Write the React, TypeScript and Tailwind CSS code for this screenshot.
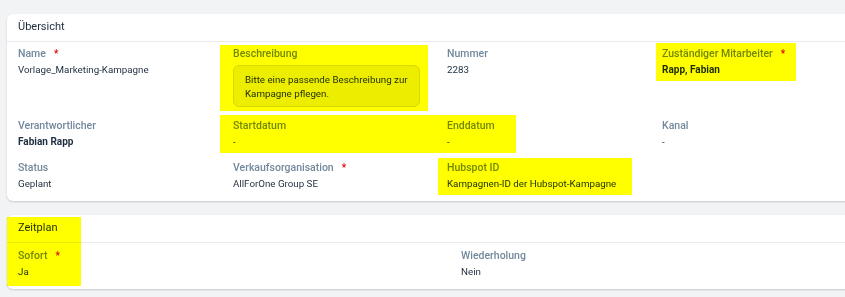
import React from "react";

const font = { fontFamily: 'Roboto, "Liberation Sans", Arial, sans-serif' };

function Label({ text, required }: { text: string; required?: boolean }) {
  return (
    <div className="flex items-center h-[12px] leading-[12px] text-[10.5px] font-medium text-[#73889c]">
      <span>{text}</span>
      {required && <span className="ml-[8px] text-[10px] text-[#e00000]">*</span>}
    </div>
  );
}

function Field({
  label,
  value,
  required,
  bold,
}: {
  label: string;
  value: string;
  required?: boolean;
  bold?: boolean;
}) {
  return (
    <div className="flex flex-col">
      <Label text={label} required={required} />
      <div
        className={`mt-[3px] h-[14px] leading-[14px] text-[#1d2d3e] ${
          bold ? "font-bold text-[10px]" : "text-[9.75px]"
        }`}
      >
        {value}
      </div>
    </div>
  );
}

function CardHeader({ title }: { title: string }) {
  return (
    <div className="h-[28px] flex items-center pl-[11px] border-b border-[#e8eaed] text-[11px] text-[#1d2d3e]">
      {title}
    </div>
  );
}

export default function App() {
  return (
    <div
      className="relative isolate w-[845px] h-[297px] overflow-hidden bg-[#f2f3f5] pt-[14px] pl-[7px]"
      style={font}
    >
      <div className="w-[900px] bg-white rounded-[6px] shadow-[0_1px_2px_rgba(0,0,0,0.18)]">
        <CardHeader title="Übersicht" />
        <div className="grid grid-cols-[215px_214px_215px_215px] gap-y-[13px] pl-[11px] pt-[6px] pb-[10px]">
          <Field label="Name" value="Vorlage_Marketing-Kampagne" required />
          <div className="flex flex-col">
            <Label text="Beschreibung" />
            <div className="mt-[5px] w-[187px] h-[42px] rounded-[6px] border border-[#d8d8d8] bg-[#ededed] px-[11px] pt-[7px] text-[9.75px] leading-[14px] text-[#1d2d3e] whitespace-nowrap">
              Bitte eine passende Beschreibung zur
              <br />
              Kampagne pflegen.
            </div>
          </div>
          <Field label="Nummer" value="2283" />
          <Field label="Zuständiger Mitarbeiter" value="Rapp, Fabian" required bold />

          <Field label="Verantwortlicher" value="Fabian Rapp" bold />
          <Field label="Startdatum" value="-" />
          <Field label="Enddatum" value="-" />
          <Field label="Kanal" value="-" />

          <Field label="Status" value="Geplant" />
          <Field label="Verkaufsorganisation" value="AllForOne Group SE" required />
          <Field label="Hubspot ID" value="Kampagnen-ID der Hubspot-Kampagne" />
          <div />
        </div>
      </div>

      <div className="mt-[14px] w-[900px] bg-white rounded-[6px] shadow-[0_1px_2px_rgba(0,0,0,0.18)]">
        <CardHeader title="Zeitplan" />
        <div className="grid grid-cols-[443px_443px] pl-[11px] pt-[7px] pb-[10px]">
          <Field label="Sofort" value="Ja" required />
          <Field label="Wiederholung" value="Nein" />
        </div>
      </div>

      {/* highlight annotations */}
      <div className="pointer-events-none absolute left-[220px] top-[45px] w-[208px] h-[66px] bg-[#ffff00] mix-blend-multiply" />
      <div className="pointer-events-none absolute left-[220px] top-[115px] w-[296px] h-[38px] bg-[#ffff00] mix-blend-multiply" />
      <div className="pointer-events-none absolute left-[656px] top-[43px] w-[140px] h-[38px] bg-[#ffff00] mix-blend-multiply" />
      <div className="pointer-events-none absolute left-[438px] top-[158px] w-[194px] h-[37px] bg-[#ffff00] mix-blend-multiply" />
      <div className="pointer-events-none absolute left-[7px] top-[217px] w-[74px] h-[69px] bg-[#ffff00] mix-blend-multiply" />
    </div>
  );
}
